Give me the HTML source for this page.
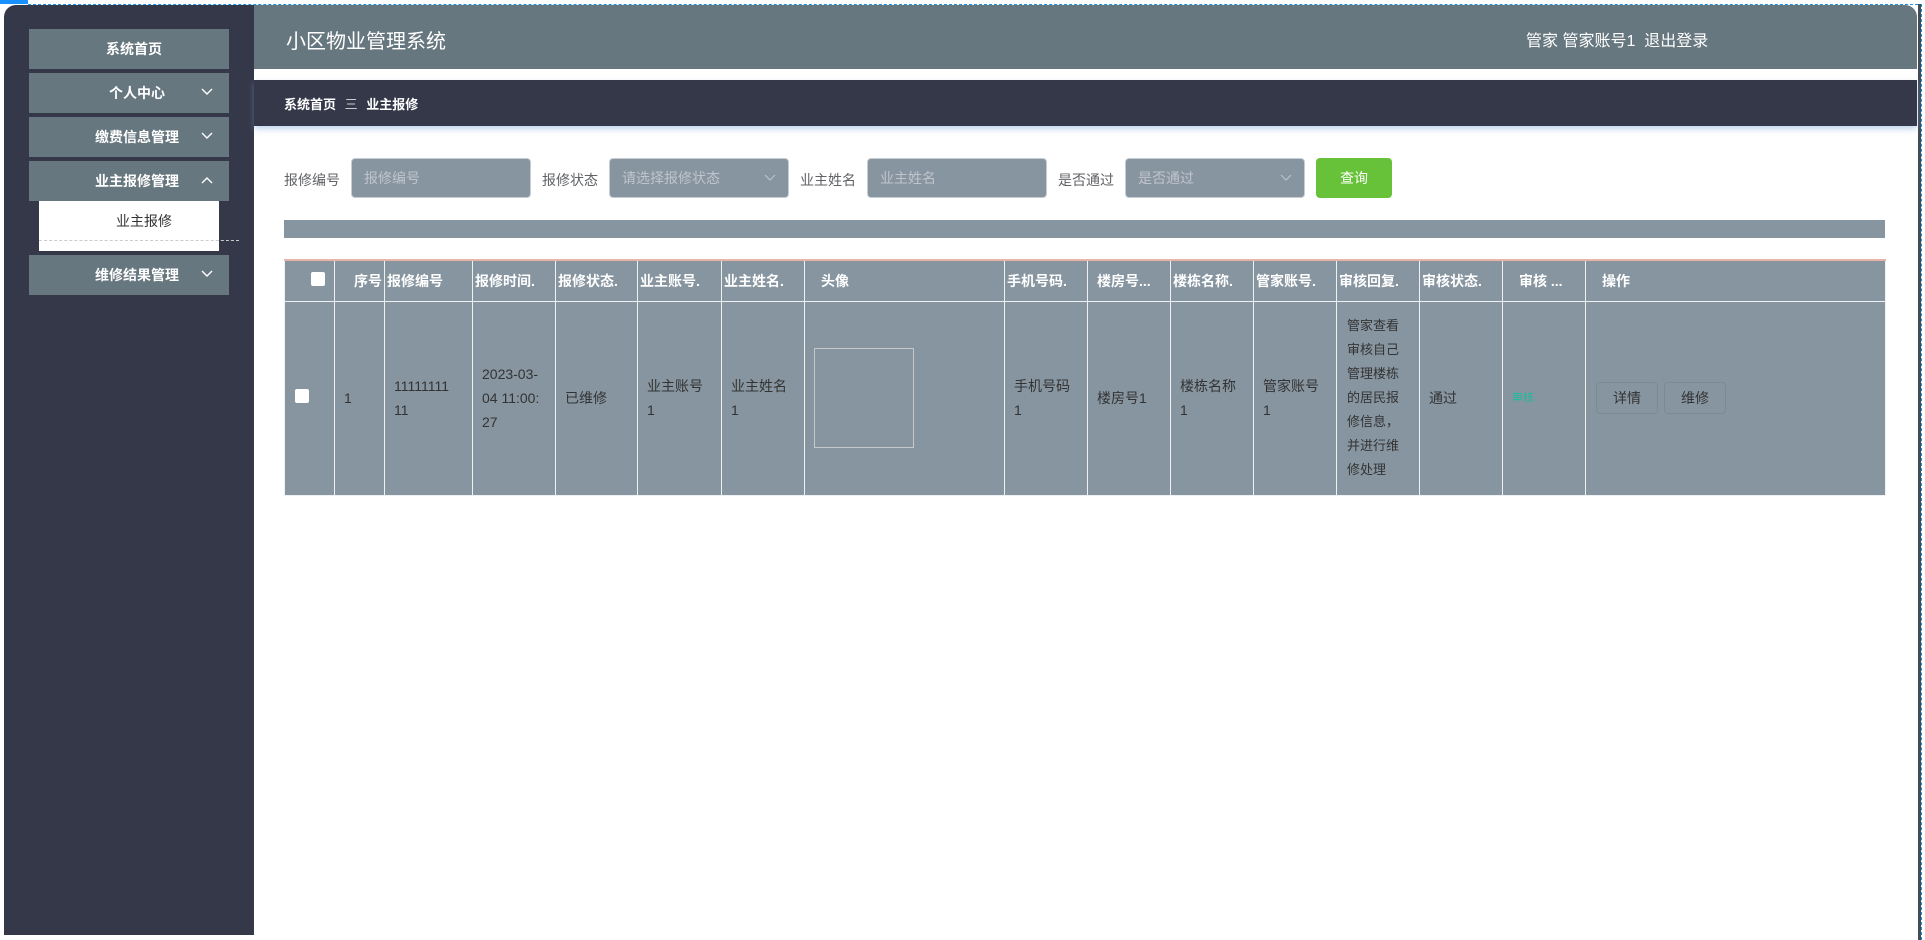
<!DOCTYPE html>
<html><head><meta charset="utf-8"><style>
*{margin:0;padding:0;box-sizing:border-box}
body{width:1925px;height:940px;overflow:hidden;background:#fff;font-family:"Liberation Sans","Noto Sans CJK SC",sans-serif;position:relative}
.a{position:absolute}
.side{left:4px;top:5px;width:250px;height:930px;background:#353849;border-radius:12px 0 0 0}
.mi{position:absolute;left:25px;width:200px;height:40px;background:#67777f;color:#fff;font-size:14px;line-height:40px;text-align:center;padding-left:16px;font-weight:bold}
.mi svg{position:absolute;right:16px;top:15px}
.hdr{left:254px;top:5px;width:1663px;height:64px;background:#67777f;border-radius:0 12px 0 0}
.bc{left:254px;top:80px;width:1663px;height:46px;background:#353849;box-shadow:0 3px 6px rgba(120,160,220,.45)}
.lbl{font-size:14px;color:#606266;top:170px}
.inp{top:158px;height:40px;width:180px;background:#8795a0;border:1px solid #c7ccd2;border-radius:4px;color:#c0c4cc;font-size:14px;line-height:38px;padding-left:12px}
.inp svg{position:absolute;right:12px;top:15px}
table{border-collapse:collapse;position:absolute;left:284px;top:259px;width:1601px;background:#8795a0;table-layout:fixed;border-top:2px solid #e8b4a8}
td,th{border:1px solid #eef0f2;font-size:14px;text-align:left;padding:0 9px;vertical-align:middle}
th{color:#fff;height:41px;font-weight:bold;white-space:nowrap;overflow:hidden}
td{color:#333;height:194px;line-height:24px}
.cb{width:14px;height:14px;background:#fff;border-radius:2px;display:inline-block}
.btn{display:inline-block;width:62px;height:32px;border:1px solid #7d8a94;border-radius:4px;text-align:center;line-height:30px;margin-right:6px;color:#333}
</style></head><body>
<div class="a" style="left:0;top:0;width:28px;height:4px;background:#1890ff"></div>
<div class="a" style="left:28px;top:4px;width:1890px;border-top:1px dashed #1e90e0"></div>
<div class="a" style="left:1918px;top:4px;width:3px;height:936px;background:#444b55"></div>
<div class="a" style="left:1921px;top:4px;height:936px;border-left:1px dashed #1e90e0"></div>
<div class="a side">
 <div class="mi" style="top:24px;padding-left:10px">系统首页</div>
 <div class="mi" style="top:68px">个人中心<svg width="12" height="8"><path d="M1 1l5 5 5-5" stroke="#fff" fill="none" stroke-width="1.4"/></svg></div>
 <div class="mi" style="top:112px">缴费信息管理<svg width="12" height="8"><path d="M1 1l5 5 5-5" stroke="#fff" fill="none" stroke-width="1.4"/></svg></div>
 <div class="mi" style="top:156px">业主报修管理<svg width="12" height="8"><path d="M1 7l5-5 5 5" stroke="#fff" fill="none" stroke-width="1.4"/></svg></div>
 <div class="a" style="left:35px;top:196px;width:180px;height:50px;background:#fff;color:#333;font-size:14px;text-align:center;line-height:28px;padding-top:6px;padding-left:30px">业主报修<div style="position:absolute;left:0;top:39px;width:200px;border-top:1px dashed #ccc"></div></div>
 <div class="mi" style="top:250px">维修结果管理<svg width="12" height="8"><path d="M1 1l5 5 5-5" stroke="#fff" fill="none" stroke-width="1.4"/></svg></div>
</div>
<div class="a hdr"><div class="a" style="left:32px;top:20px;color:#fff;font-size:20px">小区物业管理系统</div>
<div class="a" style="left:1272px;top:22px;color:#fff;font-size:16px;white-space:nowrap">管家 管家账号1&nbsp;&nbsp;退出登录</div></div>
<div class="a bc"><div class="a" style="left:30px;top:14px;color:#fff;font-size:13px;font-weight:bold;white-space:nowrap">系统首页 <span style="font-weight:normal;color:#ccc;margin:0 5px">三</span> 业主报修</div></div>
<div class="a lbl" style="left:284px">报修编号</div>
<div class="a inp" style="left:351px">报修编号</div>
<div class="a lbl" style="left:542px">报修状态</div>
<div class="a inp" style="left:609px">请选择报修状态<svg width="12" height="8"><path d="M1 1l5 5 5-5" stroke="#c0c4cc" fill="none"/></svg></div>
<div class="a lbl" style="left:800px">业主姓名</div>
<div class="a inp" style="left:867px">业主姓名</div>
<div class="a lbl" style="left:1058px">是否通过</div>
<div class="a inp" style="left:1125px">是否通过<svg width="12" height="8"><path d="M1 1l5 5 5-5" stroke="#c0c4cc" fill="none"/></svg></div>
<div class="a" style="left:1316px;top:158px;width:76px;height:40px;background:#67c23a;border-radius:4px;color:#fff;font-size:14px;text-align:center;line-height:40px">查询</div>
<div class="a" style="left:284px;top:220px;width:1601px;height:18px;background:#8795a0"></div>
<table>
<colgroup><col style="width:50px"><col style="width:50px"><col style="width:88px"><col style="width:83px"><col style="width:82px"><col style="width:84px"><col style="width:83px"><col style="width:200px"><col style="width:83px"><col style="width:83px"><col style="width:83px"><col style="width:83px"><col style="width:83px"><col style="width:83px"><col style="width:83px"><col style="width:300px"></colgroup>
<tr><th style="text-align:center;padding-left:16px;padding-right:0"><span class="cb"></span></th><th style="text-align:right;padding-right:2px">序号</th><th style="padding-left:2px">报修编号</th><th style="padding-left:2px">报修时间.</th><th style="padding-left:2px">报修状态.</th><th style="padding-left:2px">业主账号.</th><th style="padding-left:2px">业主姓名.</th><th style="padding-left:16px">头像</th><th style="padding-left:2px">手机号码.</th><th>楼房号...</th><th style="padding-left:2px">楼栋名称.</th><th style="padding-left:2px">管家账号.</th><th style="padding-left:2px">审核回复.</th><th style="padding-left:2px">审核状态.</th><th style="padding-left:16px">审核 ...</th><th style="padding-left:16px">操作</th></tr>
<tr><td style="padding-left:10px"><span class="cb"></span></td><td>1</td><td>11111111<br>11</td><td>2023-03-<br>04 11:00:<br>27</td><td>已维修</td><td>业主账号<br>1</td><td>业主姓名<br>1</td><td><div style="width:100px;height:100px;border:1px solid #c8c8c8"></div></td><td>手机号码<br>1</td><td>楼房号1</td><td>楼栋名称<br>1</td><td>管家账号<br>1</td><td style="font-size:13px;line-height:24px;padding:0 10px">管家查看审核自己管理楼栋的居民报修信息，并进行维修处理</td><td>通过</td><td style="color:#1abc9c;font-size:11px">审核</td><td style="padding-left:10px"><span class="btn">详情</span><span class="btn">维修</span></td></tr>
</table>
</body></html>
